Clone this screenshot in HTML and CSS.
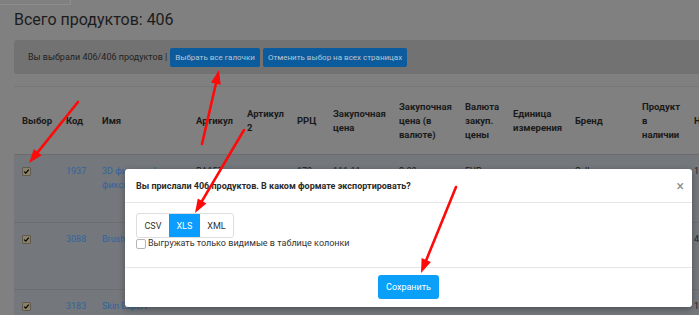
FILE: index.html
```html
<!DOCTYPE html>
<html lang="ru">
<head>
<meta charset="utf-8">
<title>Продукты</title>
<link rel="stylesheet" href="styles.css">
</head>
<body>
<div class="tabstub"></div>
<main class="page">
  <h1 class="title">Всего продуктов: 406</h1>
  <div class="selbar">
    <span class="selbar-text">Вы выбрали 406/406 продуктов |</span>
    <button class="btn-dark">Выбрать все галочки</button>
    <button class="btn-dark">Отменить выбор на всех страницах</button>
  </div>
  <table class="products">
    <colgroup>
      <col class="w44"><col class="w36"><col class="w94"><col class="w51"><col class="w50"><col class="w36"><col class="w66"><col class="w66"><col class="w48"><col class="w62"><col class="w67"><col class="w52"><col class="w60">
    </colgroup>
    <thead>
      <tr>
        <th>Выбор</th><th>Код</th><th>Имя</th><th>Артикул</th><th>Артикул 2</th><th>РРЦ</th><th>Закупочная цена</th><th>Закупочная цена (в валюте)</th><th>Валюта закуп. цены</th><th>Единица измерения</th><th>Бренд</th><th>Продукт в наличии</th><th>Но склад</th>
      </tr>
    </thead>
    <tbody>
      <tr>
        <td><span class="chk"><svg viewBox="0 0 9 9" width="7" height="7"><path d="M1.5 4.6 L3.6 6.6 L7.4 2.2" fill="none" stroke="#000" stroke-width="1.6"/></svg></span></td>
        <td><a class="lnk">1937</a></td><td><a class="lnk">3D фигурный фиксатор</a></td><td>ВА157</td><td></td><td>170</td><td>111.11</td><td>2.00</td><td>EUR</td><td></td><td>Sell</td><td></td><td>1</td>
      </tr>
      <tr>
        <td><span class="chk"><svg viewBox="0 0 9 9" width="7" height="7"><path d="M1.5 4.6 L3.6 6.6 L7.4 2.2" fill="none" stroke="#000" stroke-width="1.6"/></svg></span></td>
        <td><a class="lnk">3088</a></td><td><a class="lnk">Brush кисточка</a></td><td></td><td></td><td></td><td></td><td></td><td></td><td></td><td></td><td></td><td>4</td>
      </tr>
      <tr>
        <td><span class="chk"><svg viewBox="0 0 9 9" width="7" height="7"><path d="M1.5 4.6 L3.6 6.6 L7.4 2.2" fill="none" stroke="#000" stroke-width="1.6"/></svg></span></td>
        <td><a class="lnk">3183</a></td><td><a class="lnk">Skin Expert</a></td><td></td><td></td><td></td><td></td><td></td><td></td><td></td><td></td><td></td><td>1</td>
      </tr>
    </tbody>
  </table>
</main>

<div class="modal">
  <div class="modal-head">
    <span class="modal-title">Вы прислали 406 продуктов. В каком формате экспортировать?</span>
    <span class="modal-close">×</span>
  </div>
  <div class="modal-body">
    <div class="btn-group">
      <span class="seg">CSV</span><span class="seg seg-active">XLS</span><span class="seg">XML</span>
    </div>
    <label class="visible-only"><span class="box"></span>Выгружать только видимые в таблице колонки</label>
  </div>
  <div class="modal-foot">
    <button class="btn-save">Сохранить</button>
  </div>
</div>

<svg class="arrows" width="699" height="315" viewBox="0 0 699 315">
  <g stroke="#ff0a0a" stroke-width="2.6" stroke-linecap="round" fill="none">
    <line x1="78" y1="102" x2="37.8" y2="152.1"/>
    <line x1="202" y1="144" x2="215.9" y2="83.7"/>
    <line x1="244" y1="130" x2="202.1" y2="200.9"/>
    <line x1="456" y1="187" x2="426.3" y2="260"/>
  </g>
  <g fill="#ff0a0a">
    <polygon points="29,163 41.7,155.2 33.9,149"/>
    <polygon points="219,70 220.7,84.8 211,82.5"/>
    <polygon points="195,213 206.4,203.5 197.8,198.4"/>
    <polygon points="421,273 430.9,261.9 421.6,258.1"/>
  </g>
</svg>
</body>
</html>
```

FILE: styles.css
```css
* { box-sizing: border-box; }
html, body { margin: 0; padding: 0; }
body {
  width: 699px;
  height: 315px;
  overflow: hidden;
  position: relative;
  background: #808080;
  font-family: Roboto, "Noto Sans", Arial, sans-serif;
  color: #1b1b1b;
}
.tabstub {
  position: absolute;
  left: 0;
  top: 0;
  width: 71px;
  height: 5px;
  border-right: 1px solid #8d8d8d;
  border-bottom: 1px solid #8d8d8d;
}
.page {
  width: 800px;
  padding: 10px 0 0 14px;
}
.title {
  margin: 0;
  font-size: 16px;
  line-height: 20px;
  font-weight: 400;
  color: #1c1c1c;
}
.selbar {
  margin-top: 10px;
  height: 34px;
  display: flex;
  align-items: center;
  gap: 3px;
  padding: 0 14px;
  background: #727272;
  border-radius: 3px 0 0 3px;
  font-size: 9px;
}
.selbar-text { color: #222; }
.btn-dark {
  height: 19px;
  padding: 0 5px;
  border: 0;
  border-radius: 2px;
  background: #0c5b9c;
  color: #b8c7d6;
  font-family: inherit;
  font-size: 8px;
}
.products {
  margin-top: 12px;
  border-collapse: collapse;
  table-layout: fixed;
  width: 732px;
  border-top: 1px solid #777;
  font-size: 9px;
  line-height: 14px;
}
.w44 { width: 44px; } .w36 { width: 36px; } .w94 { width: 94px; } .w51 { width: 51px; }
.w50 { width: 50px; } .w66 { width: 66px; } .w48 { width: 48px; } .w62 { width: 62px; }
.w67 { width: 67px; } .w52 { width: 52px; } .w60 { width: 60px; }
.products th {
  height: 68px;
  padding: 0 8px;
  text-align: left;
  vertical-align: middle;
  font-size: 9.5px;
  font-weight: 700;
  color: #1a1a1a;
  border-bottom: 1px solid #6c6c6c;
}
.products td {
  height: 67.5px;
  padding: 9px 8px 0;
  vertical-align: top;
  background: #74787d;
  color: #1e1e1e;
  border-bottom: 1px solid #6a6d71;
  overflow: hidden;
}
.lnk { color: #33639a; }
.chk {
  display: block;
  width: 9px;
  height: 9px;
  margin-top: 3px;
  background: #8b8168;
  border: 1px solid #5f5a4c;
  border-radius: 1px;
}
.chk svg { display: block; width: 7px; height: 7px; }

.modal {
  position: absolute;
  left: 125px;
  top: 169px;
  width: 567px;
  height: 138px;
  background: #fff;
  border-radius: 3px;
  box-shadow: 0 2px 6px rgba(0,0,0,0.35);
  display: flex;
  flex-direction: column;
  color: #333;
}
.modal-head {
  height: 34px;
  padding: 0 11px;
  display: flex;
  align-items: center;
  justify-content: space-between;
  border-bottom: 1px solid #e6e6e6;
}
.modal-title { font-size: 9px; font-weight: 700; color: #2b2b2b; }
.modal-close { font-size: 14px; color: #8c8c8c; line-height: 1; margin-right: -3px; }
.modal-body {
  height: 65px;
  padding: 10px 11px 0;
  border-bottom: 1px solid #e6e6e6;
}
.btn-group {
  display: inline-flex;
  height: 25px;
  border: 1px solid #dedede;
  border-radius: 3px;
  overflow: hidden;
}
.seg {
  display: flex;
  align-items: center;
  padding: 0 7.5px;
  font-size: 9px;
  color: #333;
}
.seg-active { background: #0a9cff; color: #fff; }
.visible-only {
  display: flex;
  align-items: center;
  gap: 2px;
  font-size: 9px;
  line-height: 11px;
  color: #333;
}
.box {
  width: 10px;
  height: 10px;
  border: 1px solid #b5b5b5;
  border-radius: 2px;
  background: #fff;
}
.modal-foot {
  flex: 1;
  display: flex;
  justify-content: center;
  padding-top: 7px;
}
.btn-save {
  width: 61px;
  height: 24px;
  border: 0;
  border-radius: 3px;
  background: #0aa0f8;
  color: #fff;
  font-family: inherit;
  font-size: 9px;
}
.arrows {
  position: absolute;
  left: 0;
  top: 0;
  pointer-events: none;
}
```
